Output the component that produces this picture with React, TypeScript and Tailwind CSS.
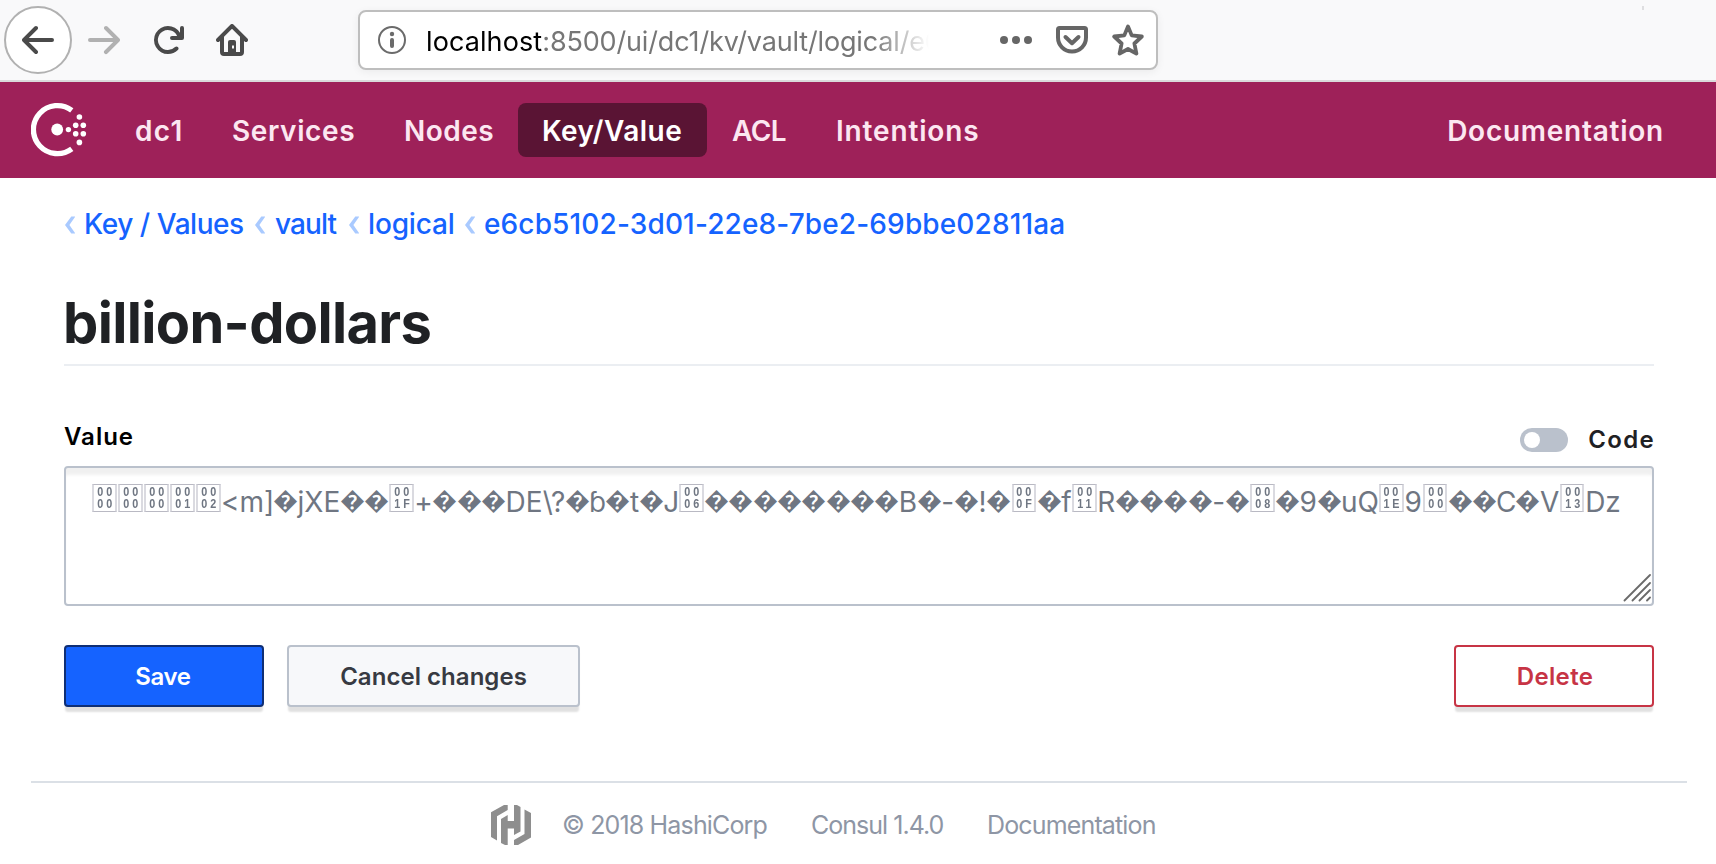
import type { ReactNode } from "react";

const REPLACEMENT = "\uFFFD";

type Token = { kind: "hex" | "text" | "bad"; value?: string; width?: string; count?: number };

const TOKENS: Token[] = [
  { kind: "hex", value: "0000" },
  { kind: "hex", value: "0000" },
  { kind: "hex", value: "0000" },
  { kind: "hex", value: "0001" },
  { kind: "hex", value: "0002" },
  { kind: "text", value: "<m]", width: "w-[52.1px]" },
  { kind: "bad", count: 1 },
  { kind: "text", value: "jXE", width: "w-[42px]" },
  { kind: "bad", count: 2 },
  { kind: "hex", value: "001F" },
  { kind: "text", value: "+", width: "w-[18.2px]" },
  { kind: "bad", count: 3 },
  { kind: "text", value: "DE\\?", width: "w-[59.6px]" },
  { kind: "bad", count: 1 },
  { kind: "text", value: "\u0253", width: "w-[15.8px]" },
  { kind: "bad", count: 1 },
  { kind: "text", value: "t", width: "w-[10px]" },
  { kind: "bad", count: 1 },
  { kind: "text", value: "J", width: "w-[14.4px]" },
  { kind: "hex", value: "0006" },
  { kind: "bad", count: 8 },
  { kind: "text", value: "B", width: "w-[18.1px]" },
  { kind: "bad", count: 1 },
  { kind: "text", value: "-", width: "w-[12.8px]" },
  { kind: "bad", count: 1 },
  { kind: "text", value: "!", width: "w-[8.3px]" },
  { kind: "bad", count: 1 },
  { kind: "hex", value: "000F" },
  { kind: "bad", count: 1 },
  { kind: "text", value: "f", width: "w-[10px]" },
  { kind: "hex", value: "0011" },
  { kind: "text", value: "R", width: "w-[17.7px]" },
  { kind: "bad", count: 4 },
  { kind: "text", value: "-", width: "w-[12.8px]" },
  { kind: "bad", count: 1 },
  { kind: "hex", value: "0008" },
  { kind: "bad", count: 1 },
  { kind: "text", value: "9", width: "w-[17.2px]" },
  { kind: "bad", count: 1 },
  { kind: "text", value: "uQ", width: "w-[37.4px]" },
  { kind: "hex", value: "001E" },
  { kind: "text", value: "9", width: "w-[17.3px]" },
  { kind: "hex", value: "0000" },
  { kind: "bad", count: 2 },
  { kind: "text", value: "C", width: "w-[19.3px]" },
  { kind: "bad", count: 1 },
  { kind: "text", value: "V", width: "w-[19.2px]" },
  { kind: "hex", value: "0013" },
  { kind: "text", value: "Dz", width: "w-[35.4px]" },
];

function HexBox({ code }: { code: string }) {
  return (
    <span className="mb-[7px] flex w-[26px] shrink-0 justify-center">
      <span className="flex h-[28px] w-[24.4px] items-center justify-center border border-x-2 border-x-[#dadae0] border-y-[#b9b9c3] bg-white">
        <span className="flex scale-x-80 flex-col pl-[4.5px] font-['Liberation_Sans'] text-[13.5px] leading-[12px] font-bold tracking-[3.6px] text-[#6f7682]">
          <span>{code.slice(0, 2)}</span>
          <span>{code.slice(2)}</span>
        </span>
      </span>
    </span>
  );
}

function TokenRun({ token }: { token: Token }) {
  if (token.kind === "hex") return <HexBox code={token.value!} />;
  if (token.kind === "bad") {
    return (
      <>
        {Array.from({ length: token.count! }, (_, i) => (
          <span key={i} className="mb-[2px] flex w-[24.32px] shrink-0 justify-center text-[25px] font-light">
            {REPLACEMENT}
          </span>
        ))}
      </>
    );
  }
  return <span className={`flex shrink-0 justify-center whitespace-pre ${token.width}`}>{token.value}</span>;
}

function BrowserBar() {
  return (
    <div className="flex h-[82px] items-center border-b-2 border-[#dadadb] bg-[#f9f9fa]">
      <div className="ml-1 flex size-[68px] items-center justify-center rounded-full border-2 border-[#b1b1b1] bg-white">
        <svg viewBox="0 0 16 16" className="size-8" fill="#4a4a4a">
          <path d="M15 7H3.414l4.293-4.293a1 1 0 0 0-1.414-1.414l-6 6a1 1 0 0 0 0 1.414l6 6a1 1 0 0 0 1.414-1.414L3.414 9H15a1 1 0 0 0 0-2z" />
        </svg>
      </div>
      <svg viewBox="0 0 16 16" className="ml-4 size-8" fill="#b1b1b1">
        <path d="M15.707 7.293l-6-6a1 1 0 0 0-1.414 1.414L12.586 7H1a1 1 0 0 0 0 2h11.586l-4.293 4.293a1 1 0 1 0 1.414 1.414l6-6a1 1 0 0 0 0-1.414z" />
      </svg>
      <svg viewBox="0 0 16 16" className="ml-8 size-8" fill="#4a4a4a">
        <path d="M15 1a1 1 0 0 0-1 1v2.418A6.995 6.995 0 1 0 8 15a6.954 6.954 0 0 0 4.95-2.05 1 1 0 0 0-1.414-1.414A5.019 5.019 0 1 1 12.549 6H10a1 1 0 0 0 0 2h5a1 1 0 0 0 1-1V2a1 1 0 0 0-1-1z" />
      </svg>
      <svg viewBox="0 0 16 16" className="ml-8 size-8" fill="#4a4a4a" fillRule="evenodd">
        <path d="M8.707.293a1 1 0 0 0-1.414 0l-7 7a1 1 0 0 0 1.414 1.414L2 8.414V14a2 2 0 0 0 2 2h8a2 2 0 0 0 2-2V8.414l.293.293a1 1 0 0 0 1.414-1.414zM8 2.414l4 4V14h-2V9a1 1 0 0 0-1-1H7a1 1 0 0 0-1 1v5H4V6.414zM8 10.7h1v1.5H8z" />
      </svg>
      <div className="ml-[110px] flex h-[60px] w-[800px] items-center rounded-lg border-2 border-[#bebebe] bg-white shadow-[0_2px_8px_rgba(0,0,0,0.06)]">
        <svg viewBox="0 0 28 28" className="ml-[18px] size-7">
          <circle cx="14" cy="14" r="13" fill="none" stroke="#6b6b6b" strokeWidth="2" />
          <circle cx="14" cy="8" r="2.2" fill="#6b6b6b" />
          <rect x="12" y="12" width="4" height="10" rx="1.9" fill="#6b6b6b" />
        </svg>
        <div className="ml-[20px] w-[503px] pt-1 text-[27px] leading-[36px] whitespace-nowrap [mask-image:linear-gradient(to_right,black_calc(100%_-_56px),transparent)]">
          <span className="tracking-[0.1px] text-black">localhost</span>
          <span className="tracking-[-0.15px] text-[#767676]">:8500/ui/dc1/kv/vault/logical/e6</span>
        </div>
        <svg viewBox="0 0 32 32" className="ml-[71px] size-8" fill="#666">
          <circle cx="4" cy="16" r="4" />
          <circle cx="16" cy="16" r="4" />
          <circle cx="28" cy="16" r="4" />
        </svg>
        <svg viewBox="0 0 32 32" className="ml-6 size-8" fill="none" stroke="#666" strokeWidth="4" strokeLinecap="round" strokeLinejoin="round">
          <path d="M3.5 4H28.5Q30 4 30 5.5V13.500C30 21 24 27.500 16 27.500S2 21 2 13.500V5.500Q2 4 3.500 4Z" />
          <path d="M9.500 13L16 19.200L22.500 13" />
        </svg>
        <svg viewBox="0 0 32 32" className="ml-6 size-8" fill="none" stroke="#666" strokeWidth="3.800" strokeLinejoin="round">
          <path d="M16 2.400L19.700 11.400L29.800 12.500L22.400 19.500L24.400 29.600L16 25L7.600 29.600L9.600 19.500L2.200 12.500L12.300 11.400Z" />
        </svg>
      </div>
      <div className="mb-16 ml-[484px] h-1 w-[2px] bg-[#dedee0]" />
    </div>
  );
}

function ConsulLogo() {
  return (
    <svg viewBox="31 102 56 56" className="ml-[31px] size-14 shrink-0" fill="#fff">
      <path d="M71.800 110.400A24 24 0 1 0 71.800 148.800" fill="none" stroke="#fff" strokeWidth="5.300" />
      <circle cx="57.200" cy="129.500" r="5.900" />
      <circle cx="68.400" cy="129.600" r="2.700" />
      <circle cx="75.700" cy="125.300" r="2.800" />
      <circle cx="83.300" cy="125.300" r="2.800" />
      <circle cx="75.700" cy="133.800" r="2.800" />
      <circle cx="83.300" cy="133.800" r="2.800" />
      <circle cx="79.400" cy="117" r="2.800" />
      <circle cx="79.400" cy="142.400" r="2.800" />
    </svg>
  );
}

function Nav() {
  return (
    <nav className="flex h-24 items-center bg-[#9e2159] text-[28px] leading-[52px] font-semibold text-[#fce7f1]">
      <ConsulLogo />
      <a className="ml-12 w-[97px] pt-[2px] tracking-[1.3px]">dc1</a>
      <a className="w-[172px] pt-[2px] tracking-[0.6px]">Services</a>
      <a className="w-[114px] pt-[2px] tracking-[0.5px]">Nodes</a>
      <a className="h-[54px] w-[189px] rounded-lg bg-[#5a1434] pt-[2px] pl-6 tracking-[0.45px] text-white">Key/Value</a>
      <a className="ml-[25px] w-[104px] pt-[2px] tracking-[-0.6px]">ACL</a>
      <a className="pt-[2px] tracking-[0.85px]">Intentions</a>
      <a className="mr-[52px] ml-auto pt-[2px] tracking-[0.75px]">Documentation</a>
    </nav>
  );
}

function Crumb({ className, children }: { className: string; children: ReactNode }) {
  return (
    <a className={`flex items-center ${className}`}>
      <svg viewBox="0 0 10 18" className="mt-[2px] h-[18px] w-[10px] shrink-0">
        <path d="M6.300 0.500H10.300L4.400 9L10.300 17.500H6.300L0 9Z" fill="#a9caff" />
      </svg>
      {children}
    </a>
  );
}

function HashiLogo() {
  return (
    <svg viewBox="0 0 40 40" className="mb-[2px] ml-[460px] size-10" fill="#8e8e8e">
      <path d="M13 0H16.700V5L6 11.300V35.400L0 32V7.300Z" />
      <path d="M10 14L16.700 10V16H23V0H26L29.500 2V26.500L23 30V23.500H16.700V40H14L10 38Z" />
      <path d="M33.500 4.600L40 8V32.500L27 40H23V35L33.500 29Z" />
    </svg>
  );
}

export default function App() {
  return (
    <div className="h-[864px] w-[1716px] overflow-hidden bg-white font-['Inter','Liberation_Sans',sans-serif]">
      <BrowserBar />
      <Nav />
      <main className="mx-16 w-[1590px] pt-[26px]">
        <div className="ml-px flex h-10 items-center text-[28px] font-medium text-[#1563ff]">
          <Crumb className="w-[190px] gap-[9px] tracking-[-0.45px]">Key / Values</Crumb>
          <Crumb className="w-[94px] gap-[10px] tracking-[-0.9px]">vault</Crumb>
          <Crumb className="w-[116px] gap-[9px] tracking-[-0.15px]">logical</Crumb>
          <Crumb className="gap-[9px] tracking-[0.14px]">e6cb5102-3d01-22e8-7be2-69bbe02811aa</Crumb>
        </div>
        <h1 className="mt-[39px] flex h-[83px] items-center border-b-2 border-[#ebeef2] pb-[2px] text-[56px] font-bold tracking-[-0.66px] text-[#1f2124]">
          <span className="-ml-px">billion-dollars</span>
        </h1>
        <div className="mt-[54px] flex h-10 items-center text-[24px] font-semibold">
          <label className="mb-[6px] tracking-[1px] text-black">Value</label>
          <span className="ml-auto flex h-6 w-12 items-center rounded-full bg-[#bac1cc] pl-1">
            <span className="size-4 rounded-full bg-white" />
          </span>
          <span className="-mr-px ml-5 tracking-[1.3px] text-[#1f2124]">Code</span>
        </div>
        <div className="relative mt-[6px] h-[140px] rounded border-2 border-[#bac1cc] bg-white pt-1 pl-[25.5px] shadow-[inset_0_8px_3px_-1px_rgba(0,0,0,0.06)]">
          <div className="flex h-[59px] items-center text-[28px] font-normal text-[#6f7682]">
            {TOKENS.map((token, i) => (
              <TokenRun key={i} token={token} />
            ))}
          </div>
          <svg viewBox="0 0 28 28" className="absolute right-px bottom-[2px] size-7" stroke="#6a6a6a" strokeWidth="1.800" strokeLinecap="round">
            <path d="M1.500 26.500L27 1M9.500 26.500L27 9M16.500 26.500L27 16M24 26.500L27 23.500" />
          </svg>
        </div>
        <div className="mt-[39px] flex h-[62px] text-[24px] font-semibold">
          <button className="w-[200px] rounded border-2 border-[#0f2f75] bg-[#1563ff] pt-px pr-[2px] tracking-[-0.38px] text-white shadow-[0_6px_2px_-1px_rgba(0,0,0,0.12)]">Save</button>
          <button className="ml-[23px] w-[293px] rounded border-2 border-[#bac1cc] bg-[#f7f8fa] pt-px tracking-[0.04px] text-[#373a42] shadow-[0_6px_2px_-1px_rgba(0,0,0,0.12)]">Cancel changes</button>
          <button className="ml-auto w-[200px] rounded border-2 border-[#c73445] bg-white pt-px pl-[2px] tracking-[0.35px] text-[#c73445] shadow-[0_6px_2px_-1px_rgba(0,0,0,0.12)]">Delete</button>
        </div>
      </main>
      <footer className="mt-[74px] ml-[31px] flex h-[83px] w-[1656px] items-center border-t-2 border-[#dbe0e6] pt-[5px] text-[25px] text-[#8e96a5]">
        <HashiLogo />
        <span className="ml-[31px] w-[249px] tracking-[-0.85px]">© 2018 HashiCorp</span>
        <span className="w-[176px] tracking-[-0.98px]">Consul 1.4.0</span>
        <span className="tracking-[-0.85px]">Documentation</span>
      </footer>
    </div>
  );
}
